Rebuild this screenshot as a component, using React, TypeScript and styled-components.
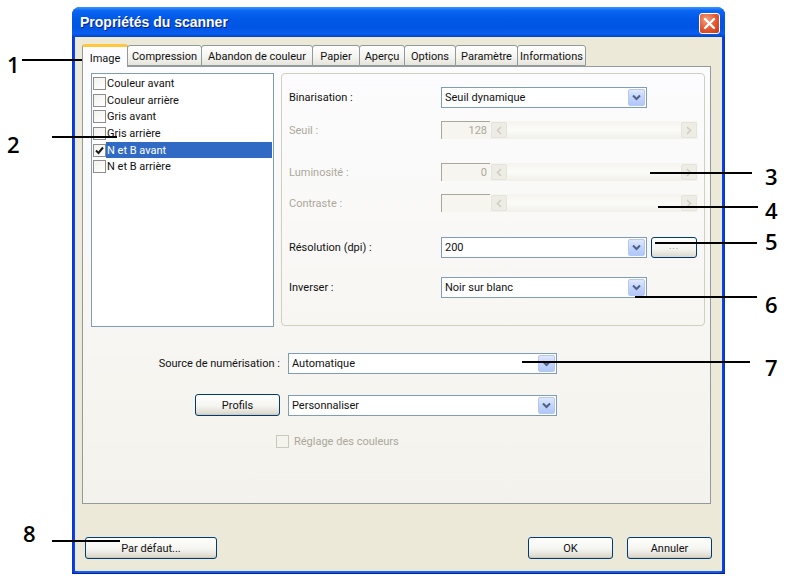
import React from 'react';
import styled, { createGlobalStyle } from 'styled-components';

const GlobalStyle = createGlobalStyle`
	html, body {
		margin: 0;
		padding: 0;
		background: #ffffff;
	}
	body {
		font-family: Roboto, 'Liberation Sans', Arial, sans-serif;
		font-size: 11px;
		color: #111;
	}
	* {
		box-sizing: border-box;
	}
`;

const listItems = [
	{ id: 'ca', label: 'Couleur avant', checked: false },
	{ id: 'cr', label: 'Couleur arrière', checked: false },
	{ id: 'ga', label: 'Gris avant', checked: false },
	{ id: 'gr', label: 'Gris arrière', checked: false },
	{ id: 'na', label: 'N et B avant', checked: true },
	{ id: 'nr', label: 'N et B arrière', checked: false },
];

const tabs = [
	{ id: 'image', label: 'Image', w: 46 },
	{ id: 'compression', label: 'Compression', w: 75 },
	{ id: 'abandon', label: 'Abandon de couleur', w: 112 },
	{ id: 'papier', label: 'Papier', w: 48 },
	{ id: 'apercu', label: 'Aperçu', w: 46 },
	{ id: 'options', label: 'Options', w: 52 },
	{ id: 'parametre', label: 'Paramètre', w: 63 },
	{ id: 'informations', label: 'Informations', w: 69 },
];

// callout lines + numbers drawn over the screenshot
const callouts = [
	{ n: '1', nx: 7, ny: 53, lx: 22, ly: 59, lw: 84 },
	{ n: '2', nx: 7, ny: 133, lx: 52, ly: 136, lw: 65 },
	{ n: '3', nx: 765, ny: 165, lx: 650, ly: 172, lw: 102 },
	{ n: '4', nx: 765, ny: 199, lx: 658, ly: 206, lw: 100 },
	{ n: '5', nx: 765, ny: 230, lx: 655, ly: 242, lw: 102 },
	{ n: '6', nx: 765, ny: 293, lx: 635, ly: 296, lw: 122 },
	{ n: '7', nx: 765, ny: 356, lx: 522, ly: 361, lw: 228 },
	{ n: '8', nx: 23, ny: 522, lx: 52, ly: 540, lw: 68 },
];

const Chevron = ({ color = '#4d6185' }: { color?: string }) => (
	<svg width='9' height='7' viewBox='0 0 9 7'>
		<polyline points='1,1.5 4.5,5 8,1.5' fill='none' stroke={color} strokeWidth='2' />
	</svg>
);

const Arrow = ({ dir }: { dir: 'left' | 'right' }) => (
	<svg width='6' height='9' viewBox='0 0 6 9'>
		<polyline
			points={dir === 'left' ? '5,1 1.5,4.5 5,8' : '1,1 4.5,4.5 1,8'}
			fill='none'
			stroke='#cfcdc2'
			strokeWidth='1.6'
		/>
	</svg>
);

const Check = () => (
	<svg width='9' height='9' viewBox='0 0 9 9'>
		<polyline points='1,4.5 3.5,7 8,1.5' fill='none' stroke='#1a1a1a' strokeWidth='2' />
	</svg>
);

const Combo = ({ value, w }: { value: string; w: number }) => (
	<ComboBox $w={w}>
		<span>{value}</span>
		<DropButton>
			<Chevron />
		</DropButton>
	</ComboBox>
);

const Slider = ({ value }: { value: string }) => (
	<SliderWrap>
		<NumBox>{value}</NumBox>
		<ScrollTrack>
			<ScrollArrow>
				<Arrow dir='left' />
			</ScrollArrow>
			<ScrollArrow>
				<Arrow dir='right' />
			</ScrollArrow>
		</ScrollTrack>
	</SliderWrap>
);

const App = () => {
	return (
		<Page>
			<GlobalStyle />
			<Window>
				<TitleBar>
					<Title>Propriétés du scanner</Title>
					<CloseButton>
						<svg width='13' height='13' viewBox='0 0 13 13'>
							<path d='M2 2 L11 11 M11 2 L2 11' stroke='#fff' strokeWidth='2.4' strokeLinecap='round' />
						</svg>
					</CloseButton>
				</TitleBar>

				<Body>
					<TabStrip>
						{tabs.map(tab => (
							<Tab key={tab.id} $w={tab.w} $active={tab.id === 'image'}>
								{tab.label}
							</Tab>
						))}
					</TabStrip>

					<Panel>
						<TopRow>
							<ListBox>
								{listItems.map(item => (
									<ListItem key={item.id}>
										<CheckBox>{item.checked && <Check />}</CheckBox>
										<ItemText $selected={item.checked}>{item.label}</ItemText>
									</ListItem>
								))}
							</ListBox>

							<GroupBox>
								<FieldRow $mt={0} $h={20}>
									<FieldLabel>Binarisation :</FieldLabel>
									<Combo value='Seuil dynamique' w={206} />
								</FieldRow>
								<FieldRow $mt={14} $h={18}>
									<FieldLabel $disabled>Seuil :</FieldLabel>
									<Slider value='128' />
								</FieldRow>
								<FieldRow $mt={24} $h={18}>
									<FieldLabel $disabled>Luminosité :</FieldLabel>
									<Slider value='0' />
								</FieldRow>
								<FieldRow $mt={13} $h={18}>
									<FieldLabel $disabled>Contraste :</FieldLabel>
									<Slider value='' />
								</FieldRow>
								<FieldRow $mt={25} $h={21}>
									<FieldLabel>Résolution (dpi) :</FieldLabel>
									<Combo value='200' w={206} />
									<DotsButton>...</DotsButton>
								</FieldRow>
								<FieldRow $mt={19} $h={20}>
									<FieldLabel>Inverser :</FieldLabel>
									<Combo value='Noir sur blanc' w={206} />
								</FieldRow>
							</GroupBox>
						</TopRow>

						<FormRow $mt={26}>
							<RightLabel>Source de numérisation :</RightLabel>
							<Combo value='Automatique' w={269} />
						</FormRow>
						<FormRow $mt={20}>
							<XpButton $w={85}>Profils</XpButton>
							<Combo value='Personnaliser' w={269} />
						</FormRow>
						<OptionRow>
							<CheckBox $disabled />
							<DisabledText>Réglage des couleurs</DisabledText>
						</OptionRow>
					</Panel>

					<Footer>
						<XpButton $w={132}>Par défaut...</XpButton>
						<FooterRight>
							<XpButton $w={85}>OK</XpButton>
							<XpButton $w={85}>Annuler</XpButton>
						</FooterRight>
					</Footer>
				</Body>
			</Window>

			{callouts.map(c => (
				<React.Fragment key={c.n}>
					<CalloutLine $x={c.lx} $y={c.ly} $w={c.lw} />
					<CalloutNumber $x={c.nx} $y={c.ny}>
						{c.n}
					</CalloutNumber>
				</React.Fragment>
			))}
		</Page>
	);
};

export default App;

const Page = styled.div`
	position: relative;
	width: 793px;
	height: 582px;
	overflow: hidden;
	padding-top: 7px;
	padding-left: 72px;
`;

const Window = styled.div`
	width: 653px;
	height: 567px;
	display: flex;
	flex-direction: column;
	padding: 0 3px 3px;
	border-radius: 8px 8px 0 0;
	background: linear-gradient(90deg, #0831d9 0%, #1660e8 1%, #1660e8 99%, #0831d9 100%);
	box-shadow: inset 0 -1px 0 #001ea0;
`;

const TitleBar = styled.div`
	height: 30px;
	margin: 0 -3px;
	display: flex;
	align-items: center;
	justify-content: space-between;
	padding: 0 5px 0 8px;
	border-radius: 8px 8px 0 0;
	background: linear-gradient(
		180deg,
		#3d95ff 0%,
		#0a66f3 12%,
		#0058e6 40%,
		#0055e5 70%,
		#0a5ff0 88%,
		#0045c8 100%
	);
`;

const Title = styled.span`
	font-family: 'Liberation Sans', Arial, sans-serif;
	font-weight: 700;
	font-size: 14px;
	color: #ffffff;
	text-shadow: 1px 1px 0 #0a1e8c;
`;

const CloseButton = styled.div`
	width: 21px;
	height: 21px;
	margin-top: 3px;
	display: flex;
	align-items: center;
	justify-content: center;
	border: 1px solid #ffffff;
	border-radius: 3px;
	background: radial-gradient(circle at 35% 30%, #f2a07e 0%, #e2552f 55%, #c23a14 100%);
`;

const Body = styled.div`
	flex: 1;
	display: flex;
	flex-direction: column;
	padding: 6px 11px 12px 7px;
	background: #ece9d8;
`;

const TabStrip = styled.div`
	height: 23px;
	display: flex;
	align-items: flex-end;
`;

const Tab = styled.div<{ $w: number; $active?: boolean }>`
	width: ${p => p.$w}px;
	height: ${p => (p.$active ? 23 : 21)}px;
	display: flex;
	align-items: center;
	justify-content: center;
	padding-top: ${p => (p.$active ? 2 : 1)}px;
	border: 1px solid #919b9c;
	border-bottom: ${p => (p.$active ? 'none' : '1px solid #919b9c')};
	border-top: ${p => (p.$active ? '3px solid #ffc83c' : '1px solid #919b9c')};
	border-radius: 3px 3px 0 0;
	margin-bottom: ${p => (p.$active ? -1 : 0)}px;
	position: relative;
	z-index: ${p => (p.$active ? 2 : 1)};
	background: ${p => (p.$active ? '#fcfcfe' : 'linear-gradient(180deg, #ffffff 0%, #f3f3ef 60%, #e6e4db 100%)')};
	white-space: nowrap;

	& + & {
		margin-left: -1px;
	}
`;

const Panel = styled.div`
	width: 629px;
	height: 438px;
	display: flex;
	flex-direction: column;
	padding: 6px 0 0 8px;
	border: 1px solid #919b9c;
	background: linear-gradient(180deg, #fcfcfe 0%, #f7f6f2 60%, #f3f2ec 100%);
`;

const TopRow = styled.div`
	display: flex;
	gap: 7px;
`;

const ListBox = styled.div`
	width: 183px;
	height: 254px;
	padding: 1px;
	border: 1px solid #7f9db9;
	background: #ffffff;
`;

const ListItem = styled.div`
	height: 16.7px;
	display: flex;
	align-items: center;
`;

const CheckBox = styled.span<{ $disabled?: boolean }>`
	width: 13px;
	height: 13px;
	flex: none;
	display: inline-flex;
	align-items: center;
	justify-content: center;
	border: 1px solid ${p => (p.$disabled ? '#cac8bb' : '#8d8d8d')};
	background: ${p => (p.$disabled ? '#f4f3ee' : 'linear-gradient(135deg, #f2f2ee 0%, #ffffff 100%)')};
`;

const ItemText = styled.span<{ $selected?: boolean }>`
	flex: 1;
	height: 100%;
	display: flex;
	align-items: center;
	padding-left: 1px;
	background: ${p => (p.$selected ? '#316ac5' : 'transparent')};
	color: ${p => (p.$selected ? '#ffffff' : '#111111')};
`;

const GroupBox = styled.div`
	width: 424px;
	height: 253px;
	display: flex;
	flex-direction: column;
	padding: 13px 0 0 7px;
	border: 1px solid #d0d0bf;
	border-radius: 4px;
`;

const FieldRow = styled.div<{ $mt: number; $h: number }>`
	height: ${p => p.$h}px;
	margin-top: ${p => p.$mt}px;
	display: flex;
	align-items: center;
`;

const FieldLabel = styled.span<{ $disabled?: boolean }>`
	width: 152px;
	flex: none;
	color: ${p => (p.$disabled ? '#aca899' : '#111111')};
`;

const ComboBox = styled.div<{ $w: number }>`
	width: ${p => p.$w}px;
	height: 21px;
	flex: none;
	display: flex;
	align-items: center;
	justify-content: space-between;
	padding: 1px 1px 1px 3px;
	border: 1px solid #7f9db9;
	background: #ffffff;
`;

const DropButton = styled.span`
	width: 17px;
	height: 17px;
	display: flex;
	align-items: center;
	justify-content: center;
	border: 1px solid #b4c8f6;
	border-radius: 2px;
	background: linear-gradient(180deg, #dfe8fd 0%, #c3d4fc 50%, #b2c7f8 100%);
`;

const DotsButton = styled.div`
	width: 46px;
	height: 21px;
	margin-left: 4px;
	display: flex;
	align-items: center;
	justify-content: center;
	padding-bottom: 3px;
	border: 1px solid #003c74;
	border-radius: 3px;
	background: linear-gradient(180deg, #ffffff 0%, #f3f3ef 60%, #dcd8cc 100%);
	font-size: 9px;
	color: #777;
	letter-spacing: 1px;
`;

const SliderWrap = styled.div`
	display: flex;
	height: 18px;
`;

const NumBox = styled.div`
	width: 49px;
	height: 18px;
	display: flex;
	align-items: center;
	justify-content: flex-end;
	padding-right: 3px;
	border-top: 1px solid #aca899;
	border-left: 1px solid #aca899;
	color: #aca899;
	background: #f6f5f0;
`;

const ScrollTrack = styled.div`
	width: 208px;
	height: 18px;
	display: flex;
	justify-content: space-between;
	padding: 1px;
	background: linear-gradient(180deg, #f5f4ef 0%, #fbfbf8 50%, #f1f0ea 100%);
`;

const ScrollArrow = styled.span`
	width: 16px;
	height: 16px;
	display: flex;
	align-items: center;
	justify-content: center;
	border: 1px solid #e6e4da;
	border-radius: 2px;
	background: #eeede5;
`;

const FormRow = styled.div<{ $mt: number }>`
	margin-top: ${p => p.$mt}px;
	display: grid;
	grid-template-columns: 189px 269px;
	column-gap: 8px;
	align-items: center;
`;

const RightLabel = styled.span`
	justify-self: end;
	white-space: nowrap;
`;

const OptionRow = styled.div`
	margin-top: 19px;
	padding-left: 185px;
	display: flex;
	align-items: center;
	gap: 5px;
`;

const DisabledText = styled.span`
	color: #aca899;
`;

const XpButton = styled.div<{ $w: number }>`
	width: ${p => p.$w}px;
	height: 22px;
	justify-self: end;
	display: flex;
	align-items: center;
	justify-content: center;
	border: 1px solid #003c74;
	border-radius: 3px;
	background: linear-gradient(180deg, #ffffff 0%, #f4f4f0 55%, #e3e0d6 85%, #d6d0c5 100%);
	box-shadow: inset 0 -1px 0 #d0cbbd;
`;

const Footer = styled.div`
	margin-top: 33px;
	padding-left: 3px;
	display: flex;
	justify-content: space-between;
	margin-right: -1px;
`;

const FooterRight = styled.div`
	display: flex;
	gap: 14px;
`;

const CalloutLine = styled.div<{ $x: number; $y: number; $w: number }>`
	position: absolute;
	left: ${p => p.$x}px;
	top: ${p => p.$y}px;
	width: ${p => p.$w}px;
	height: 2px;
	background: #000000;
`;

const CalloutNumber = styled.div<{ $x: number; $y: number }>`
	position: absolute;
	left: ${p => p.$x}px;
	top: ${p => p.$y}px;
	font-family: 'Open Sans', 'DejaVu Sans', sans-serif;
	font-weight: 600;
	font-size: 22px;
	line-height: 22px;
	color: #000000;
`;
